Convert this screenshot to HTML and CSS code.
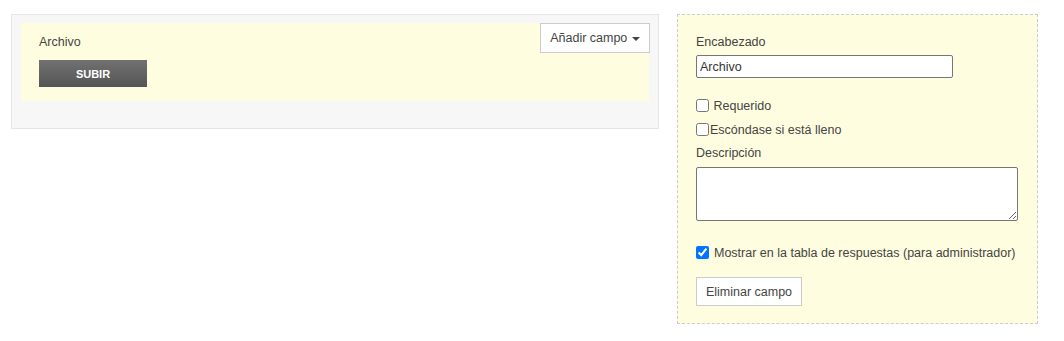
FILE: index.html
```html
<!DOCTYPE html>
<html lang="es">
<head>
    <meta charset="UTF-8" />
    <meta name="viewport" content="width=device-width, initial-scale=1.0" />
    <title>Campos del formulario</title>
    <link rel="stylesheet" href="styles.css">
</head>
<body>

<div class="page">
    <div class="form-area">
        <div class="field-preview">
            <div class="field-label">Archivo</div>
            <button class="btn-upload">SUBIR</button>
            <button class="btn-add">Añadir campo <span class="caret"></span></button>
        </div>
    </div>

    <div class="field-editor">
        <div class="editor-label">Encabezado</div>
        <input class="input-heading" type="text" value="Archivo">

        <label class="check-row check-required"><input type="checkbox"> Requerido</label>
        <label class="check-row check-hide"><input type="checkbox">Escóndase si está lleno</label>

        <div class="editor-label label-desc">Descripción</div>
        <textarea class="input-desc"></textarea>

        <label class="check-row check-admin"><input type="checkbox" checked>Mostrar en la tabla de respuestas (para administrador)</label>

        <button class="btn-remove">Eliminar campo</button>
    </div>
</div>

</body>
</html>
```

FILE: styles.css
```css
body {
    margin: 0;
    padding: 0;
    font-family: "Liberation Sans", Arial, sans-serif;
    font-size: 12.5px;
    color: #444;
    background-color: #ffffff;
}

.page {
    display: flex;
    align-items: flex-start;
    gap: 18px;
    padding: 14px 11px;
}

.form-area {
    width: 628px;
    padding: 8px 9px 27px 9px;
    background-color: #f7f7f7;
    border: 1px solid #e6e6e6;
}

.field-preview {
    position: relative;
    height: 68px;
    padding: 10px 18px 0 18px;
    background-color: #fffddf;
}

.field-label {
    line-height: 18px;
    margin-bottom: 9px;
}

.btn-upload {
    display: block;
    width: 108px;
    height: 27px;
    border: none;
    background: linear-gradient(#717171, #555555);
    color: #ffffff;
    font-family: "Liberation Sans", Arial, sans-serif;
    font-size: 11px;
    font-weight: bold;
    cursor: pointer;
}

.btn-add {
    position: absolute;
    top: 0;
    right: -1px;
    width: 110px;
    height: 30px;
    background-color: #ffffff;
    border: 1px solid #cccccc;
    color: #444;
    font-family: "Liberation Sans", Arial, sans-serif;
    font-size: 12.5px;
    padding: 0;
    cursor: pointer;
}

.caret {
    display: inline-block;
    width: 0;
    height: 0;
    margin-left: 1px;
    vertical-align: middle;
    border-top: 4px solid #444;
    border-left: 4px solid transparent;
    border-right: 4px solid transparent;
}

.field-editor {
    width: 323px;
    padding: 18px 18px 17px 18px;
    background-color: #fffddf;
    border: 1px dashed #cccccc;
}

.editor-label {
    line-height: 18px;
}

.input-heading {
    display: block;
    box-sizing: border-box;
    width: 257px;
    height: 23px;
    margin-top: 4px;
    padding: 1px 3px;
    border: 1px solid #767676;
    border-radius: 2px;
    font-family: "Liberation Sans", Arial, sans-serif;
    font-size: 12.5px;
    color: #333;
}

.check-row {
    display: block;
    line-height: 18px;
    white-space: nowrap;
}

.check-row input {
    width: 13px;
    height: 13px;
    margin: 0 1px 0 0;
    vertical-align: -2px;
}

.check-required {
    margin-top: 19px;
}

.check-hide {
    margin-top: 6px;
}

.label-desc {
    margin-top: 5px;
}

.input-desc {
    display: block;
    box-sizing: border-box;
    width: 322px;
    height: 54px;
    margin-top: 5px;
    border: 1px solid #767676;
    border-radius: 2px;
}

.check-admin {
    margin-top: 23px;
}

.check-admin input {
    margin-right: 5px;
}

.btn-remove {
    display: block;
    width: 106px;
    height: 29px;
    margin-top: 15px;
    background-color: #ffffff;
    border: 1px solid #cccccc;
    color: #444;
    font-family: "Liberation Sans", Arial, sans-serif;
    font-size: 12.5px;
    padding: 0;
    cursor: pointer;
}
```
